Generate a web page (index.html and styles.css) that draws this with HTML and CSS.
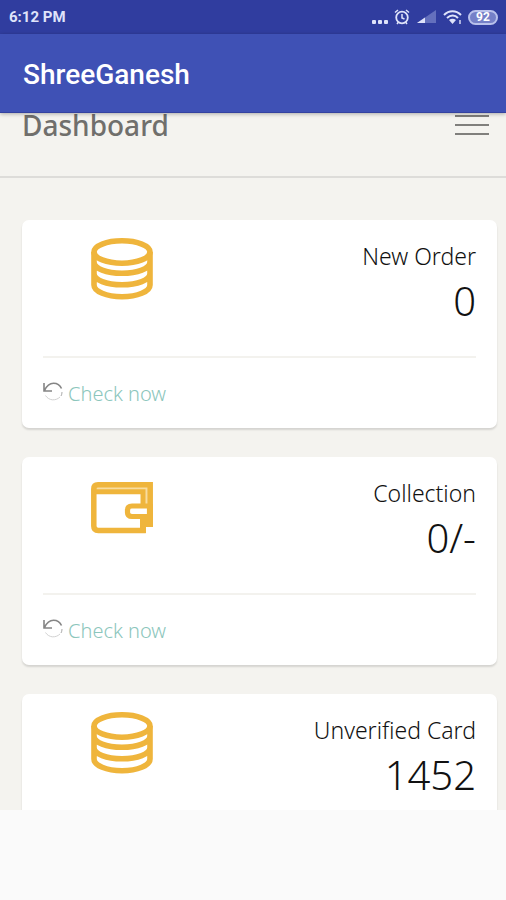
FILE: index.html
```html
<!DOCTYPE html>
<html lang="en">
<head>
<meta charset="utf-8">
<meta name="viewport" content="width=device-width, initial-scale=1">
<title>ShreeGanesh</title>
<link rel="stylesheet" href="styles.css">
</head>
<body>
<svg class="sprite" aria-hidden="true">
  <symbol id="coins" viewBox="0 0 62 62">
    <g fill="none" stroke="currentColor" stroke-width="5.6">
      <ellipse cx="31" cy="14" rx="28" ry="11.2"/>
      <path d="M3 14v33c0 6.500 12.500 11.700 28 11.700s28-5.200 28-11.700V14M3 24c0 6.500 12.500 11.200 28 11.200s28-4.700 28-11.200M3 35.500c0 6.500 12.500 11.200 28 11.200s28-4.700 28-11.200"/>
    </g>
  </symbol>
  <symbol id="wallet" viewBox="0 0 62 62">
    <path fill="#f8dc9f" d="M5 11h53v20h-8V17H5z"/>
    <g fill="none" stroke="currentColor">
      <path stroke-width="5.500" d="M59.200 31V9.800H7Q2.800 9.800 2.800 14v37q0 4.500 4.500 4.500H52V43"/>
      <path stroke-width="5" d="M3 16.800h49V31"/>
      <path stroke-width="5.200" d="M58.500 31H41q-4.500 0-4.500 4v2.500q0 4 4.500 4h17.500zV31"/>
    </g>
    <path fill="currentColor" d="M49 40h13v12h-7v6h-6zM56 29h6v14h-6z"/>
  </symbol>
  <symbol id="reload" viewBox="0 0 20 20">
    <g fill="none" stroke-width="1.600">
      <path stroke="#858585" d="M1 1v8h8M1.500 8.500C4 3 7 1.200 10.500 1.200c3.500 0 6.500 1.800 8 5.300"/>
      <path stroke="#aaa" stroke-width="1" d="M19 10c0 1.500-.3 3-1 4"/>
      <path stroke="#d2d2d2" stroke-width="1" d="M17 15c-4 4-11 4-14.500-1.500"/>
    </g>
  </symbol>
</svg>

<div class="status-bar">
  <time>6:12 PM</time>
  <div class="status-icons">
    <svg width="17" height="18" viewBox="0 0 17 18" fill="currentColor" aria-label="More notifications"><rect x="0" y="12" width="4" height="4" rx="1"/><rect x="6" y="12" width="4" height="4" rx="1"/><rect x="12" y="12" width="4" height="4" rx="1"/></svg>
    <svg class="alarm" width="16" height="18" viewBox="0 0 16 18" fill="none" stroke="currentColor" aria-label="Alarm"><circle cx="8" cy="9.500" r="5.800" stroke-width="1.800"/><path stroke-width="1.500" d="M8 6v4l2.500 1M1 4.500 4 2M15 4.500 12 2M3 16l1.500-2M13 16l-1.500-2"/></svg>
    <svg class="signal" width="19" height="18" viewBox="0 0 19 18" aria-label="Signal"><path fill="#6470bd" d="M0 15 19 2v13z"/><path fill="currentColor" d="M0 15 8 9.500V15z"/></svg>
    <svg class="wifi" width="20" height="18" viewBox="0 0 20 18" fill="none" stroke="currentColor" aria-label="Wi-Fi"><path stroke-width="2" d="M1 7c5-5 12-5 17 0M4 10c3.500-3.300 8-3.300 11 0"/><path fill="currentColor" stroke="none" d="M6 12q3.500-2.500 7 0l-3.500 4z"/><path stroke-width="2" stroke-opacity=".7" d="M17 12v4"/></svg>
    <span class="battery">92</span>
  </div>
</div>

<header class="app-bar"><h1>ShreeGanesh</h1></header>

<main class="view">
  <nav class="page-bar">
    <a href="#">Dashboard</a>
    <button type="button" class="menu" aria-label="Menu"><span></span><span></span><span></span></button>
  </nav>
  <div class="cards">
    <section class="card">
      <div class="summary">
        <svg class="icon" aria-hidden="true"><use href="#coins"/></svg>
        <div class="figures"><h2>New Order</h2><p>0</p></div>
      </div>
      <a class="check" href="#"><svg class="reload" aria-hidden="true"><use href="#reload"/></svg>Check now</a>
    </section>
    <section class="card">
      <div class="summary">
        <svg class="icon" aria-hidden="true"><use href="#wallet"/></svg>
        <div class="figures"><h2>Collection</h2><p>0/-</p></div>
      </div>
      <a class="check" href="#"><svg class="reload" aria-hidden="true"><use href="#reload"/></svg>Check now</a>
    </section>
    <section class="card">
      <div class="summary">
        <svg class="icon" aria-hidden="true"><use href="#coins"/></svg>
        <div class="figures"><h2>Unverified Card</h2><p>1452</p></div>
      </div>
    </section>
  </div>
</main>
<footer class="bottom-space"></footer>
</body>
</html>
```
FILE: styles.css
```css
* { box-sizing: border-box; }

body {
  margin: 0;
  height: 100vh;
  display: flex;
  flex-direction: column;
  overflow: hidden;
  background: #fafafa;
  color: #111;
  font-family: "Noto Sans", sans-serif;
}

h1, h2, p { margin: 0; }
a { text-decoration: none; }
.sprite { display: none; }

.status-bar {
  flex: none;
  height: 34px;
  padding: 0 8px 0 9px;
  display: flex;
  align-items: center;
  justify-content: space-between;
  background: #303d9f;
  color: #dfe3fa;
  font: 700 15px Roboto, sans-serif;
}

.status-icons { display: flex; align-items: center; gap: 5px; }
.signal { margin-left: 2px; }
.wifi { margin-left: 2px; }

.battery {
  width: 30px;
  height: 15px;
  border: 2px solid #b9c1ec;
  border-radius: 8px;
  background: #7580c8;
  color: #fff;
  font-size: 12px;
  line-height: 11px;
  text-align: center;
}

.app-bar {
  flex: none;
  height: 79px;
  padding: 3px 23px 0;
  display: flex;
  align-items: center;
  position: relative;
  z-index: 1;
  background: #3f51b5;
  border-bottom: 1px solid #3442a0;
  box-shadow: 0 1px 4px rgba(0, 0, 0, .3);
  color: #fff;
}

.app-bar h1 { font: 500 28px Roboto, sans-serif; }

.view {
  flex: 1;
  min-height: 0;
  overflow: hidden;
  background: #f4f3ef;
}

.page-bar {
  margin-top: -40px;
  height: 105px;
  padding: 0 17px 0 22px;
  display: flex;
  align-items: center;
  justify-content: space-between;
  border-bottom: 2px solid #dddcd9;
}

.page-bar a { color: #706f6c; font-size: 28px; font-weight: 500; }

.menu {
  width: 34px;
  padding: 0;
  border: 0;
  background: none;
  display: grid;
  gap: 7px;
}

.menu span { height: 2px; background: #807f7c; }

.cards {
  padding: 42px 9px 0 22px;
  display: grid;
  gap: 29px;
}

.card {
  padding: 18px 21px 0;
  border-radius: 7px;
  background: #fff;
  box-shadow: 0 2px 2px rgba(0, 0, 0, .13);
}

.summary {
  height: 120px;
  padding-left: 48px;
  display: flex;
  justify-content: space-between;
  border-bottom: 2px solid #f3f2ee;
}

.icon { width: 62px; height: 62px; color: #efb53c; }
.figures { padding-top: 3px; text-align: right; }
.figures h2 { font-size: 23px; font-weight: 300; line-height: 30px; }
.figures p { font-size: 40px; font-weight: 300; line-height: 60px; }

.check {
  height: 70px;
  display: flex;
  align-items: center;
  gap: 5px;
  color: #8cc6bc;
  font-size: 20px;
  font-weight: 300;
}

.reload { width: 20px; height: 20px; margin-bottom: 3px; }

.bottom-space { flex: none; height: 90px; }
```
